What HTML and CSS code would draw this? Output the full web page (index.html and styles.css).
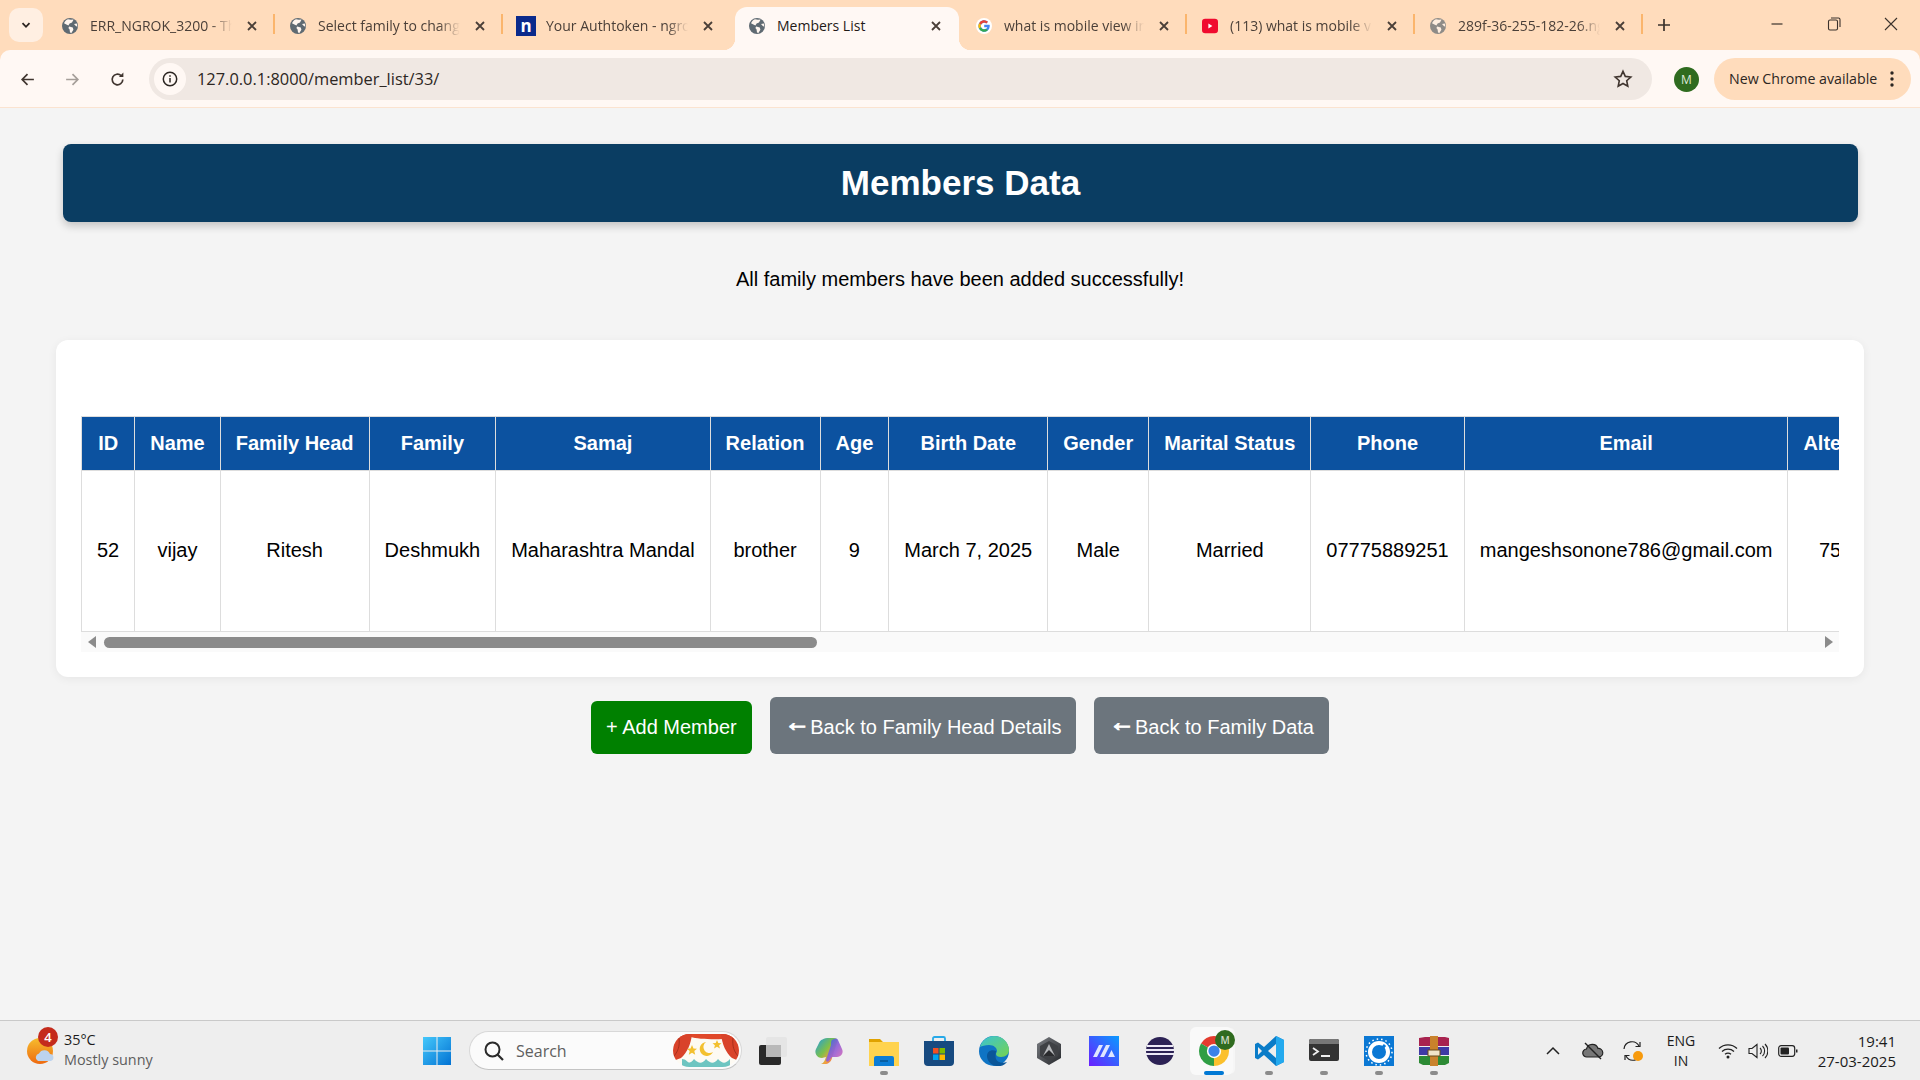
FILE: index.html
```html
<!DOCTYPE html>
<html lang="en">
<head>
  <meta charset="utf-8">
  <title>Members List</title>
  <link rel="stylesheet" href="styles.css">
</head>
<body>
  <svg class="defs" width="0" height="0">
    <symbol id="globe" viewBox="0 0 16 16">
      <circle cx="8" cy="8" r="8" fill="#5f6a72"/>
      <path d="M6 1.2l3 .6 2.6-.4L10 4.4 7.6 5.6 6.4 7.6 4.4 6.4 2 5.2C2.8 3.4 4.2 1.8 6 1.2zM7.2 8.6l3.6 1 .6 2.2-2 3.2-1.4-.4-.4-3.2-1.2-1.4zM12 6l2.8-.4.6 3.2L13.8 8z" fill="#fff6ef"/>
    </symbol>
    <symbol id="close" viewBox="0 0 12 12">
      <path d="M2 2l8 8M10 2l-8 8" stroke="#4a3f38" stroke-width="1.8" fill="none"/>
    </symbol>
  </svg>

  <div class="browser-top">
    <div class="tab-strip">
      <button class="tab-search"><svg width="12" height="12" viewBox="0 0 12 12"><path d="M2.5 4.2L6 7.8l3.5-3.6" stroke="#2b2320" stroke-width="1.8" fill="none"/></svg></button>
      <div class="tab"><svg class="favicon"><use href="#globe"/></svg><span class="tab-title">ERR_NGROK_3200 - The</span><svg class="tab-x"><use href="#close"/></svg></div>
      <div class="tab"><svg class="favicon"><use href="#globe"/></svg><span class="tab-title">Select family to change</span><svg class="tab-x"><use href="#close"/></svg></div>
      <div class="tab tab-before-active"><span class="favicon ngrok">n</span><span class="tab-title">Your Authtoken - ngrok</span><svg class="tab-x"><use href="#close"/></svg></div>
      <div class="tab tab-active"><svg class="favicon"><use href="#globe"/></svg><span class="tab-title">Members List</span><svg class="tab-x"><use href="#close"/></svg></div>
      <div class="tab tab-after-active">
        <svg class="favicon" viewBox="0 0 16 16"><circle cx="8" cy="8" r="8" fill="#fff"/><path d="M13.6 6.8H8.2v2.4h3.1A3.3 3.3 0 1 1 10.3 5.5l1.7-1.7A5.7 5.7 0 1 0 13.8 8z" fill="#4285f4"/><path d="M3 5.2l2 1.5A3.3 3.3 0 0 1 10.3 5.5L12 3.8A5.7 5.7 0 0 0 3 5.2z" fill="#ea4335"/><path d="M3 5.2a5.7 5.7 0 0 0 0 5.6l2-1.5a3.3 3.3 0 0 1 0-2.6z" fill="#fbbc05"/><path d="M3 10.8a5.7 5.7 0 0 0 8.9 1.4l-1.9-1.5a3.3 3.3 0 0 1-5-1.4z" fill="#34a853"/></svg>
        <span class="tab-title">what is mobile view in</span><svg class="tab-x"><use href="#close"/></svg></div>
      <div class="tab">
        <svg class="favicon" viewBox="0 0 20 20"><rect y="1" width="20" height="18" rx="4" fill="#f00b2f"/><path d="M8 7l5 3-5 3z" fill="#fff"/></svg>
        <span class="tab-title">(113) what is mobile vi</span><svg class="tab-x"><use href="#close"/></svg></div>
      <div class="tab"><svg class="favicon faded"><use href="#globe"/></svg><span class="tab-title">289f-36-255-182-26.ngrok</span><svg class="tab-x"><use href="#close"/></svg></div>
      <button class="new-tab"><svg width="14" height="14" viewBox="0 0 14 14"><path d="M7 1v12M1 7h12" stroke="#3b322c" stroke-width="1.7"/></svg></button>
      <div class="window-controls">
        <svg width="14" height="14" viewBox="0 0 14 14"><path d="M1.5 7h11" stroke="#3b322c" stroke-width="1.2"/></svg>
        <svg width="14" height="14" viewBox="0 0 14 14"><rect x="1.5" y="3" width="9" height="10" rx="1.5" stroke="#3b322c" fill="none" stroke-width="1.1"/><path d="M4 1h7.5A1.5 1.5 0 0 1 13 2.5V10" stroke="#3b322c" fill="none" stroke-width="1.1"/></svg>
        <svg width="14" height="14" viewBox="0 0 14 14"><path d="M1 1l12 12M13 1L1 13" stroke="#3b322c" stroke-width="1.1"/></svg>
      </div>
    </div>

    <div class="toolbar">
      <svg class="nav-btn" viewBox="0 0 16 16"><path d="M14 8H3M8 3L3 8l5 5" stroke="#40352f" stroke-width="1.6" fill="none"/></svg>
      <svg class="nav-btn" viewBox="0 0 16 16"><path d="M2 8h11M8 3l5 5-5 5" stroke="#a59e99" stroke-width="1.6" fill="none"/></svg>
      <svg class="nav-btn" viewBox="0 0 16 16"><path d="M13 8a5 5 0 1 1-1.6-3.7" stroke="#40352f" stroke-width="1.6" fill="none"/><path d="M13.5 1.5v4.2H9.3z" fill="#40352f"/></svg>
      <div class="omnibox">
        <span class="site-info"><svg width="16" height="16" viewBox="0 0 16 16"><circle cx="8" cy="8" r="6.7" stroke="#2c2622" stroke-width="1.5" fill="none"/><path d="M8 7v4.5M8 4.3v1.5" stroke="#2c2622" stroke-width="1.5"/></svg></span>
        <span class="url">127.0.0.1:8000/member_list/33/</span>
        <svg class="star" width="20" height="20" viewBox="0 0 20 20"><path d="M10 2.3l2.300 5.100 5.500.6-4.100 3.700 1.100 5.500L10 14.500l-4.800 2.700 1.100-5.500L2.200 8l5.500-.6z" stroke="#40352f" stroke-width="1.6" fill="none"/></svg>
      </div>
      <span class="avatar">M</span>
      <div class="update-pill"><span>New Chrome available</span><svg width="4" height="16" viewBox="0 0 4 16"><circle cx="2" cy="2" r="1.7" fill="#2c2622"/><circle cx="2" cy="8" r="1.7" fill="#2c2622"/><circle cx="2" cy="14" r="1.7" fill="#2c2622"/></svg></div>
    </div>
  </div>

  <main class="page">
    <header class="page-title"><h1>Members Data</h1></header>
    <p class="message">All family members have been added successfully!</p>

    <section class="card">
      <div class="table-clip">
        <table class="members">
          <thead>
            <tr>
              <th>ID</th><th>Name</th><th>Family Head</th><th>Family</th><th>Samaj</th><th>Relation</th><th>Age</th><th>Birth Date</th><th>Gender</th><th>Marital Status</th><th>Phone</th><th>Email</th><th>Alternate Phone</th>
            </tr>
          </thead>
          <tbody>
            <tr>
              <td>52</td><td>vijay</td><td>Ritesh</td><td>Deshmukh</td><td>Maharashtra Mandal</td><td>brother</td><td>9</td><td>March 7, 2025</td><td>Male</td><td>Married</td><td>07775889251</td><td>mangeshsonone786@gmail.com</td><td>75000000000</td>
            </tr>
          </tbody>
        </table>
      </div>
      <div class="scrollbar">
        <svg width="10" height="12" viewBox="0 0 10 12"><path d="M9 0v12L1 6z" fill="#8b8b8b"/></svg>
        <div class="scroll-track"><div class="scroll-thumb"></div></div>
        <svg width="10" height="12" viewBox="0 0 10 12"><path d="M1 0v12l8-6z" fill="#8b8b8b"/></svg>
      </div>
    </section>

    <div class="actions">
      <a class="btn btn-green">+ Add Member</a>
      <a class="btn btn-gray"><span class="arrow">←</span> Back to Family Head Details</a>
      <a class="btn btn-gray"><span class="arrow">←</span> Back to Family Data</a>
    </div>
  </main>

  <footer class="taskbar">
    <div class="weather">
      <span class="weather-icon">
        <svg width="30" height="30" viewBox="0 0 30 30"><defs><linearGradient id="sun" x1="0" y1="0" x2="0" y2="1"><stop offset="0" stop-color="#f6bd2e"/><stop offset="1" stop-color="#ee6a10"/></linearGradient></defs><circle cx="13" cy="15" r="13" fill="url(#sun)"/><path d="M11 25a4 4 0 0 1 1-7.5 6 6 0 0 1 11 .5 3.6 3.6 0 0 1 1 7z" fill="#bcd3ee"/></svg>
        <span class="badge">4</span>
      </span>
      <div class="weather-text"><span class="temp">35°C</span><span class="sky">Mostly sunny</span></div>
    </div>

    <span class="slot start">
      <svg width="30" height="30" viewBox="0 0 30 30"><defs><linearGradient id="win" x1="0" y1="0" x2="1" y2="1"><stop offset="0" stop-color="#45c8fb"/><stop offset="1" stop-color="#0272d3"/></linearGradient></defs><path d="M1 1h13.500v13.500H1zM15.500 1H29v13.500H15.500zM1 15.500h13.500V29H1zM15.500 15.500H29V29H15.500z" fill="url(#win)"/></svg>
    </span>

    <div class="search">
      <svg width="22" height="22" viewBox="0 0 22 22"><circle cx="9.5" cy="9.5" r="7" stroke="#2a2a2a" stroke-width="2" fill="none"/><path d="M14.500 14.500l5.500 5.500" stroke="#2a2a2a" stroke-width="2.2"/></svg>
      <span class="search-label">Search</span>
      <svg class="search-art" width="66" height="33" viewBox="0 0 66 33"><defs><clipPath id="pill"><rect width="66" height="33" rx="16.5"/></clipPath></defs><g clip-path="url(#pill)"><rect width="66" height="33" fill="#fdfaf3"/><path d="M0 0h66v3c-8 3-40 3-48 0H0z" fill="#e0482a"/><path d="M0 0h19c-1 10-5 19-11 24L0 27zM66 0H48c1 10 5 19 11 24l7 3z" fill="#d9432a"/><path d="M6 4c1 8-1 14-6 19M60 4c-1 8 1 14 6 19" stroke="#a92f1c" fill="none"/><path d="M9 25c6 0 6 8 12 0 5 5 8 5 12 0 5 5 8 5 12 0 5 5 7 5 12 0v8H9z" fill="#6ec5c1"/><path d="M33 8a7 7 0 1 0 7 10 6 6 0 0 1-7-10z" fill="#f3c02f"/><path d="M19 11l1.500 3.500 3.500.3-2.700 2.300.9 3.600-3.200-2-3.200 2 .9-3.600-2.700-2.300 3.500-.3zM44 6l1.300 3 3.200.3-2.400 2 .8 3.200-2.900-1.700-2.900 1.700.8-3.200-2.400-2 3.200-.3z" fill="#f3c02f"/></g></svg>
    </div>

    <span class="slot task-view">
      <svg width="30" height="30" viewBox="0 0 30 30"><rect x="1" y="9" width="22" height="20" rx="2" fill="#2a2a2a"/><rect x="8" y="1" width="21" height="20" rx="2" fill="#e3e3e3" opacity=".85"/><rect x="8" y="9" width="15" height="12" fill="#b9b9b9"/></svg>
    </span>

    <div class="apps">
      <span class="slot">
        <svg width="30" height="30" viewBox="0 0 30 30"><defs><linearGradient id="cop" x1="0" y1="0" x2="1" y2="1"><stop offset="0" stop-color="#1d9be6"/><stop offset=".45" stop-color="#7cc04a"/><stop offset=".7" stop-color="#f3a23c"/><stop offset="1" stop-color="#e3475f"/></linearGradient><linearGradient id="cop2" x1="0" y1="0" x2="1" y2="1"><stop offset="0" stop-color="#2a6fdc"/><stop offset=".5" stop-color="#8f5fd8"/><stop offset="1" stop-color="#e66fb4"/></linearGradient></defs><path d="M15 2h5c3 0 4 3 3 5l-5 15c-1 4-4 6-7 6H7c3-1 4-4 5-7l-4 1c-5 0-8-5-6-9l3-6c1-3 5-5 10-5z" fill="url(#cop)"/><path d="M18 4c3-2 5-2 6 0l4 9c2 4-1 8-5 8h-5l-3 4c-1 1-3 1-3-1l5-15c0-3 0-4 1-5z" fill="url(#cop2)" opacity=".92"/></svg>
      </span>
      <span class="slot running">
        <svg width="30" height="30" viewBox="0 0 30 30"><path d="M0 3h11l3 3h16v4H0z" fill="#e0a200"/><path d="M0 6h30v24H0z" fill="#ffd34f"/><path d="M5 22a2 2 0 0 1 2-2h16a2 2 0 0 1 2 2v8H5z" fill="#0c7dd6"/><path d="M11 25h8" stroke="#07528f" stroke-width="1.4"/></svg>
      </span>
      <span class="slot">
        <svg width="30" height="30" viewBox="0 0 30 30"><path d="M9 5V2.500A1.500 1.500 0 0 1 10.500 1h9A1.500 1.500 0 0 1 21 2.500V5" stroke="#27a9e8" stroke-width="1.8" fill="none"/><path d="M0 5h30v21a4 4 0 0 1-4 4H4a4 4 0 0 1-4-4z" fill="#174a80"/><path d="M9 12h5.500v5.500H9z" fill="#f25022"/><path d="M15.500 12H21v5.500h-5.500z" fill="#7fba00"/><path d="M9 18.500h5.500V24H9z" fill="#00a4ef"/><path d="M15.500 18.500H21V24h-5.500z" fill="#ffb900"/></svg>
      </span>
      <span class="slot">
        <svg width="30" height="30" viewBox="0 0 30 30"><defs><linearGradient id="edge" x1="0" y1="0" x2="1" y2="1"><stop offset="0" stop-color="#39c3d6"/><stop offset="1" stop-color="#76d34f"/></linearGradient></defs><circle cx="15" cy="15" r="15" fill="#0f74c4"/><path d="M1 11C3 4 9 0 15 0c8 0 15 6 15 14 0 4-3 7-8 7-3 0-5-1-5-3 0-1 1-2 1-3 0-3-3-6-8-6-4 0-7 1-9 2z" fill="url(#edge)"/><path d="M17 15c-4-2-9 0-9 5 0 5 4 9 9 10 4 1 9-1 11-4-5 2-10 0-11-3-1-3 0-6 0-8z" fill="#0a5699"/></svg>
      </span>
      <span class="slot">
        <svg width="30" height="30" viewBox="0 0 30 30"><defs><linearGradient id="hex" x1="0" y1="0" x2="1" y2="1"><stop offset="0" stop-color="#7a7d82"/><stop offset="1" stop-color="#25272b"/></linearGradient></defs><path d="M15 1l12 7v14l-12 7-12-7V8z" fill="url(#hex)"/><path d="M15 5l9 5v10l-9 5-9-5V10z" fill="#3f4145"/><path d="M15 8l6 12H9z" fill="#b6b8bb"/><path d="M15 14l6 6H9z" fill="#2a2b2e"/></svg>
      </span>
      <span class="slot">
        <svg width="30" height="30" viewBox="0 0 30 30"><defs><linearGradient id="mcode" x1="1" y1="0" x2="0" y2="1"><stop offset="0" stop-color="#0a9bff"/><stop offset="1" stop-color="#6a1eff"/></linearGradient></defs><rect width="30" height="30" fill="url(#mcode)"/><path d="M4 21l6-12h4L8 21zM11 21l6-12h4l-6 12zM19 21l3.500-7 3.500 7z" fill="#dfe6ff"/></svg>
      </span>
      <span class="slot">
        <svg width="30" height="30" viewBox="0 0 30 30"><path d="M17 0a15 15 0 0 0 0 30 15 15 0 0 1 0-30z" fill="#f39a2b"/><circle cx="16" cy="15" r="14" fill="#2c2255"/><path d="M3 10h26M2 14h28M2 18h28" stroke="#ece9f6" stroke-width="2"/></svg>
      </span>
      <span class="slot active running">
        <svg width="30" height="30" viewBox="0 0 24 24"><path d="M12 12L1.610 6A12 12 0 0 1 22.390 6z" fill="#e33b2e"/><path d="M12 12L22.390 6A12 12 0 0 1 12 24z" fill="#fbc02d"/><path d="M12 12V24A12 12 0 0 1 1.610 6z" fill="#2f9e44"/><circle cx="12" cy="12" r="5.7" fill="#fff"/><circle cx="12" cy="12" r="4.5" fill="#3b82e8"/></svg>
        <span class="app-badge">M</span>
      </span>
      <span class="slot running">
        <svg width="30" height="30" viewBox="0 0 30 30"><path d="M22 0l8 4v22l-8 4-12-11-6 4.500-3-1.500v-14l3-1.500 6 4.500z" fill="#0a7cc8"/><path d="M22 0l8 4v22l-8 4z" fill="#23a9ee"/><path d="M22 8l-8 7 8 7z" fill="#eeeeee"/><path d="M4 11l4 4-4 4z" fill="#eeeeee"/></svg>
      </span>
      <span class="slot running">
        <svg width="30" height="30" viewBox="0 0 30 30"><rect y="3" width="30" height="22" rx="2" fill="#333"/><path d="M0 5a2 2 0 0 1 2-2h26a2 2 0 0 1 2 2v3H0z" fill="#777"/><path d="M4 12l5 3.500L4 19" stroke="#eee" stroke-width="1.8" fill="none"/><path d="M12 20h9" stroke="#eee" stroke-width="2"/></svg>
      </span>
      <span class="slot running">
        <svg width="30" height="30" viewBox="0 0 30 30"><rect width="30" height="30" fill="#0b78d4"/><circle cx="15" cy="16" r="9" stroke="#fff" stroke-width="4" fill="none"/><circle cx="15" cy="16" r="13" stroke="#fff" stroke-width="1.5" stroke-dasharray="1.5 3" fill="none"/><path d="M15 16l6-7" stroke="#0b78d4" stroke-width="3"/></svg>
      </span>
      <span class="slot running">
        <svg width="30" height="30" viewBox="0 0 30 30"><path d="M0 2l6-1h20l4 1v8H0z" fill="#a8234f"/><path d="M0 11h30v8H0z" fill="#3f3aa5"/><path d="M0 20h30v7l-4 2H4l-4-2z" fill="#2c8a34"/><path d="M11 0h8v30h-8z" fill="#c9822c"/><path d="M9 14h12v6H9z" fill="#f0e4c8" stroke="#6b4a1a"/></svg>
      </span>
    </div>

    <div class="tray">
      <span class="tray-icon wide"><svg width="14" height="10" viewBox="0 0 14 10"><path d="M1 8l6-6 6 6" stroke="#222" stroke-width="1.5" fill="none"/></svg></span>
      <span class="tray-icon wide"><svg width="22" height="18" viewBox="0 0 22 18"><path d="M5 15a4 4 0 0 1-.5-8A6 6 0 0 1 16 6.500 4.200 4.200 0 0 1 17 15z" fill="#777" stroke="#222" stroke-width="1.2"/><path d="M3 1l16 16" stroke="#222" stroke-width="1.4"/></svg></span>
      <span class="tray-icon wide"><svg width="22" height="22" viewBox="0 0 22 22"><path d="M2 9a8 8 0 0 1 15-3M19 13a8 8 0 0 1-15 3" stroke="#222" stroke-width="1.2" fill="none"/><path d="M18 2v4.500h-4.500M3 20v-4.500h4.500" stroke="#222" stroke-width="1.2" fill="none"/><circle cx="16" cy="16" r="5" fill="#f79a0d"/></svg></span>
      <span class="lang">ENG<br>IN</span>
      <span class="tray-icon"><svg width="20" height="16" viewBox="0 0 20 16"><path d="M1 5.500a13 13 0 0 1 18 0M4 8.500a9 9 0 0 1 12 0M7 11.300a5 5 0 0 1 6 0" stroke="#222" stroke-width="1.3" fill="none"/><circle cx="10" cy="14" r="1.5" fill="#222"/></svg></span>
      <span class="tray-icon"><svg width="20" height="16" viewBox="0 0 20 16"><path d="M1 5.500h3L9 1.500v13l-5-4H1z" stroke="#222" stroke-width="1.1" fill="none"/><path d="M12 5a4 4 0 0 1 0 6M14.500 3a7 7 0 0 1 0 10M17 1a10 10 0 0 1 0 14" stroke="#222" stroke-width="1.1" fill="none"/></svg></span>
      <span class="tray-icon"><svg width="20" height="12" viewBox="0 0 20 12"><rect x=".7" y=".7" width="16" height="10.6" rx="2.5" stroke="#222" stroke-width="1.2" fill="none"/><rect x="2.5" y="2.5" width="8.5" height="7" rx="1" fill="#222"/><path d="M18 4.500h1.500v3H18z" fill="#222"/></svg></span>
      <div class="clock"><span>19:41</span><span>27-03-2025</span></div>
    </div>
  </footer>
</body>
</html>
```

FILE: styles.css
```css
* {
  margin: 0;
  padding: 0;
  box-sizing: border-box;
}

:root {
  --strip: #ffdcbc;
  --toolbar: #fff8f4;
  --omnibox: #f0e8e3;
  --ink: #2c2622;
  --page: #f4f4f4;
  --ui-font: "Open Sans", "Noto Sans", sans-serif;
}

html, body {
  height: 1080px;
  overflow: hidden;
}

body {
  display: flex;
  flex-direction: column;
  background: var(--page);
  font-family: "Liberation Sans", Arial, sans-serif;
  color: #000;
}

.defs {
  position: absolute;
}

button {
  border: none;
  background: none;
}

.browser-top {
  background: var(--strip);
  font-family: var(--ui-font);
}

/* Browser tabs */
.tab-strip {
  display: flex;
  align-items: flex-start;
  height: 50px;
  padding-left: 9px;
}

.tab-search {
  display: flex;
  align-items: center;
  justify-content: center;
  width: 34px;
  height: 34px;
  margin: 8px 4px 0 0;
  border-radius: 10px;
  background: #ffefe2;
}

.tab {
  position: relative;
  display: flex;
  align-items: center;
  width: 228px;
  height: 43px;
  margin-top: 7px;
  padding: 0 17px 6px 15px;
  font-size: 14px;
  color: #4a3f38;
}

/* separator between two inactive tabs */
.tab::after {
  content: "";
  position: absolute;
  top: 7px;
  right: 0;
  width: 2px;
  height: 20px;
  background: #fbb56c;
}

.tab > .tab-x {
  width: 12px;
  height: 12px;
  flex: none;
}

.tab-before-active::after {
  display: none;
}

.tab-active {
  z-index: 1;
  width: 224px;
  margin-right: 4px;
  margin-left: 4px;
  padding-left: 14px;
  border-radius: 12px 12px 0 0;
  background: var(--toolbar);
  color: #1f1a17;
}

/* the curved feet of the selected tab */
.tab-active::before,
.tab-active::after {
  content: "";
  position: absolute;
  top: auto;
  bottom: 0;
  display: block;
  width: 12px;
  height: 12px;
  background: radial-gradient(circle at 0 0, transparent 12px, var(--toolbar) 12.5px);
}

.tab-active::before {
  left: -12px;
}

.tab-active::after {
  right: -12px;
  background: radial-gradient(circle at 100% 0, transparent 12px, var(--toolbar) 12.5px);
}

.tab-after-active {
  margin-left: -4px;
  padding-left: 17px;
}

.favicon {
  flex: none;
  width: 16px;
  height: 16px;
  margin-right: 12px;
}

.faded {
  opacity: .7;
}

.ngrok {
  display: flex;
  align-items: center;
  justify-content: center;
  width: 20px;
  height: 20px;
  margin-left: -2px;
  margin-right: 10px;
  background: #0a2a8c;
  color: #fff;
  font-weight: 700;
  font-size: 17px;
  line-height: 1;
}

.tab-title {
  flex: 1;
  margin-right: 14px;
  overflow: hidden;
  white-space: nowrap;
  -webkit-mask-image: linear-gradient(to right, #000 85%, transparent);
  mask-image: linear-gradient(to right, #000 85%, transparent);
}

.tab-active .tab-title {
  -webkit-mask-image: none;
  mask-image: none;
}

.new-tab {
  display: flex;
  align-items: center;
  justify-content: center;
  width: 42px;
  height: 34px;
  margin-top: 8px;
}

.window-controls {
  display: flex;
  align-items: center;
  gap: 43px;
  margin-left: auto;
  height: 50px;
  padding-right: 22px;
  padding-bottom: 2px;
}

/* Address bar */
.toolbar {
  display: flex;
  align-items: center;
  height: 58px;
  padding: 1px 9px 0 19px;
  border-radius: 10px 10px 0 0;
  background: var(--toolbar);
  border-bottom: 1px solid #fbe3d0;
  color: var(--ink);
}

.nav-btn {
  flex: none;
  width: 17px;
  height: 17px;
  margin-right: 28px;
}

.nav-btn:nth-of-type(3) {
  margin-right: 23px;
}

.omnibox {
  display: flex;
  align-items: center;
  flex: none;
  width: 1503px;
  height: 42px;
  padding: 0 19px 0 5px;
  border-radius: 21px;
  background: var(--omnibox);
}

.site-info {
  display: flex;
  align-items: center;
  justify-content: center;
  width: 32px;
  height: 32px;
  border-radius: 50%;
  background: #fff8f4;
}

.url {
  margin-left: 11px;
  padding-bottom: 2px;
  font-size: 16.4px;
}

.star {
  margin-left: auto;
}

.avatar {
  display: flex;
  align-items: center;
  justify-content: center;
  flex: none;
  width: 25px;
  height: 25px;
  margin-left: 22px;
  border-radius: 50%;
  background: #2f6b1f;
  color: #dfe9da;
  font-size: 12px;
}

.update-pill {
  display: flex;
  align-items: center;
  justify-content: space-between;
  flex: none;
  width: 197px;
  height: 42px;
  margin-left: 15px;
  padding: 0 17px 0 15px;
  border-radius: 21px;
  background: var(--strip);
  font-size: 14.2px;
  white-space: nowrap;
}

.update-pill span {
  padding-bottom: 2px;
}

/* Page content */
.page {
  flex: 1;
  padding: 36px 56px 0;
  background: var(--page);
}

.page-title {
  margin: 0 6px 0 7px;
  padding: 18px 0;
  border-radius: 8px;
  background: #0a3d62;
  color: #fff;
  text-align: center;
  box-shadow: 0 4px 8px rgba(0, 0, 0, .2);
}

.page-title h1 {
  font-size: 35px;
  line-height: 42px;
}

.message {
  margin: 46px 0 49px;
  font-size: 20px;
  line-height: 23px;
  text-align: center;
}

.card {
  padding: 76px 25px 25px;
  border-radius: 12px;
  background: #fff;
  box-shadow: 0 2px 10px rgba(0, 0, 0, .06);
}

.table-clip {
  overflow: hidden;
}

.members {
  border-collapse: collapse;
  font-size: 20px;
  white-space: nowrap;
}

.members th,
.members td {
  padding: 15px;
  border: 1px solid #ddd;
  text-align: center;
}

.members th {
  background: #0c52a0;
  color: #fff;
}

.members td {
  height: 161px;
  padding-bottom: 17px;
}

.scrollbar {
  display: flex;
  align-items: center;
  height: 20px;
  padding: 0 5px 0 6px;
  gap: 7px;
  background: #fafafa;
}

.scroll-track {
  flex: 1;
}

.scroll-thumb {
  width: 713px;
  height: 11px;
  border-radius: 6px;
  background: #8b8b8b;
}

.actions {
  display: flex;
  align-items: flex-end;
  justify-content: center;
  gap: 18px;
  margin-top: 20px;
}

.btn {
  display: block;
  padding: 15px;
  border-radius: 6px;
  color: #fff;
  font-size: 20px;
  line-height: 23px;
  white-space: nowrap;
}

.btn-green {
  background: #008000;
}

.btn-gray {
  padding-top: 19px;
  background: #6c757d;
}

.arrow {
  font-size: 25px;
  line-height: 0;
  letter-spacing: -5px;
  vertical-align: 3px;
  -webkit-text-stroke: 1.4px #fff;
}

/* Windows taskbar */
.taskbar {
  display: flex;
  align-items: center;
  height: 60px;
  border-top: 1px solid #c9c9c9;
  background: #eeeeee;
  font-family: var(--ui-font);
}

.weather {
  display: flex;
  align-items: center;
  flex: none;
  width: 415px;
  padding-left: 27px;
  gap: 7px;
}

.weather-icon {
  position: relative;
  display: block;
  width: 30px;
  height: 30px;
}

.badge {
  position: absolute;
  top: -9px;
  left: 11px;
  display: flex;
  align-items: center;
  justify-content: center;
  width: 20px;
  height: 20px;
  border-radius: 50%;
  background: #c42b1c;
  color: #fff;
  font-size: 13px;
  font-weight: 600;
}

.weather-text {
  display: flex;
  flex-direction: column;
  margin-bottom: 2px;
  font-size: 14.4px;
  line-height: 20px;
  color: #1b1b1b;
}

.sky {
  color: #5d5d5d;
}

.slot {
  position: relative;
  display: flex;
  align-items: center;
  justify-content: center;
  flex: none;
  width: 55px;
  height: 48px;
}

.start {
  width: 44px;
  margin-right: 10px;
}

.search {
  display: flex;
  align-items: center;
  flex: none;
  width: 273px;
  height: 39px;
  padding: 0 2px 0 13px;
  border: 1px solid #d8d8d8;
  border-bottom-color: #c4c4c4;
  border-radius: 20px;
  background: #fbfbfb;
}

.search-label {
  margin-left: 11px;
  color: #5f5f5f;
  font-size: 16px;
}

.search-art {
  margin-left: auto;
}

.task-view {
  margin-left: 3px;
  margin-right: 1px;
}

.apps {
  display: flex;
}

.running::after {
  content: "";
  position: absolute;
  bottom: 0;
  left: 24px;
  width: 8px;
  height: 4px;
  border-radius: 2px;
  background: #8b8b8b;
}

.active {
  width: 43px;
  margin: 0 8px 0 4px;
  padding-left: 5px;
  border-radius: 6px;
  background: #f9f9f9;
  box-shadow: 3px 0 0 -1px #f6f6f6;
}

.active::after {
  left: 14px;
  width: 20px;
  background: #0078d4;
}

.app-badge {
  position: absolute;
  top: 3px;
  right: -2px;
  display: flex;
  align-items: center;
  justify-content: center;
  width: 20px;
  height: 20px;
  border-radius: 50%;
  background: #2f6b1f;
  color: #cfdcc8;
  font-size: 10px;
  font-weight: 600;
}

.tray {
  display: flex;
  align-items: center;
  margin-left: auto;
  padding-right: 24px;
  color: #1b1b1b;
}

.tray-icon {
  display: flex;
  align-items: center;
  justify-content: center;
  width: 30px;
}

.tray-icon.wide {
  width: 40px;
}

.lang {
  width: 56px;
  margin-right: 4px;
  font-size: 14px;
  line-height: 20px;
  text-align: center;
}

.clock {
  display: flex;
  flex-direction: column;
  align-items: flex-end;
  width: 93px;
  font-size: 15px;
  line-height: 20px;
}
```
